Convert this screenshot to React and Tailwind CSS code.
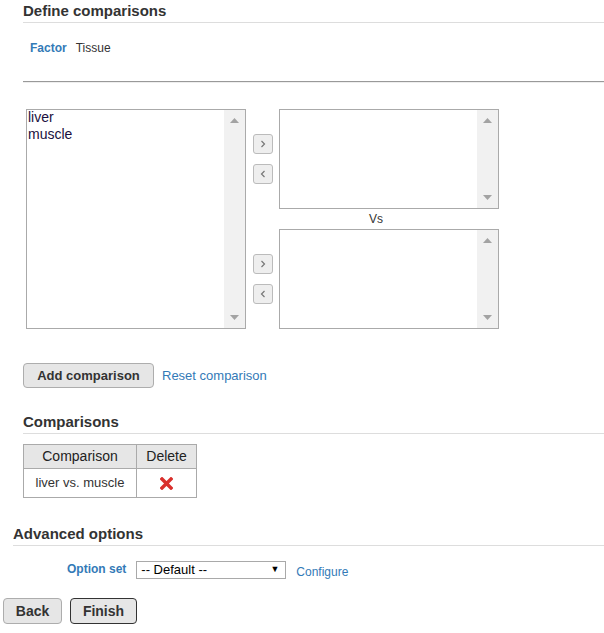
import React from "react";

function ScrollList({ items = [], className = "" }) {
    return (
        <div className={`flex border border-[#aaa] bg-white ${className}`}>
            <div className="flex-1 pl-[1px] -mt-[1px] text-[14px] leading-[17px] text-[#1a1040]">
                {items.map((it) => (
                    <div key={it}>{it}</div>
                ))}
            </div>
            {/* fake scrollbar */}
            <div className="w-[21px] bg-[#f1f1f1] flex flex-col justify-between items-center py-[8px]">
                <svg width="9" height="5" viewBox="0 0 9 5">
                    <polygon points="0,5 9,5 4.5,0" fill="#a3a3a3" />
                </svg>
                <svg width="9" height="5" viewBox="0 0 9 5">
                    <polygon points="0,0 9,0 4.5,5" fill="#a3a3a3" />
                </svg>
            </div>
        </div>
    );
}

function ArrowBtn({ dir }) {
    return (
        <button className="w-[20px] h-[20px] rounded-[3px] border border-[#bbb] bg-[#eee] flex items-center justify-center">
            <svg width="6" height="8" viewBox="0 0 6 8">
                {dir === "right" ? (
                    <polyline points="1.5,1 4.5,4 1.5,7" fill="none" stroke="#777" strokeWidth="1.2" />
                ) : (
                    <polyline points="4.5,1 1.5,4 4.5,7" fill="none" stroke="#777" strokeWidth="1.2" />
                )}
            </svg>
        </button>
    );
}

function Heading({ children, className = "" }) {
    return (
        <h3 className={`text-[15px] font-bold leading-[20px] pt-[1px] pb-[1px] text-[#333] border-b border-[#ddd] ${className}`}>
            {children}
        </h3>
    );
}

export default function App() {
    return (
        <div className="w-[604px] h-[633px] bg-white text-[#333] overflow-hidden" style={{ fontFamily: '"Liberation Sans", Arial, sans-serif' }}>
            {/* Define comparisons */}
            <div className="pl-[23px]">
                <Heading>Define comparisons</Heading>

                <div className="mt-[17px] pl-[7px] leading-[16px] text-[12px] flex gap-[9px]">
                    <span className="font-bold text-[#337ab7]">Factor</span>
                    <span>Tissue</span>
                </div>

                <div className="mt-[25px] border-t border-[#999] border-b border-b-[#eee] h-[2px]" />

                {/* list boxes */}
                <div className="mt-[26px] ml-[3px] flex">
                    <ScrollList items={["liver", "muscle"]} className="w-[220px] h-[220px]" />

                    <div className="ml-[7px] flex flex-col w-[246px]">
                        <div className="flex h-[100px]">
                            <div className="flex flex-col gap-[10px] pt-[25px]">
                                <ArrowBtn dir="right" />
                                <ArrowBtn dir="left" />
                            </div>
                            <ScrollList className="ml-[6px] w-[220px] h-[100px]" />
                        </div>
                        <div className="h-[20px] text-center text-[12px] leading-[20px]">Vs</div>
                        <div className="flex h-[100px]">
                            <div className="flex flex-col gap-[10px] pt-[25px]">
                                <ArrowBtn dir="right" />
                                <ArrowBtn dir="left" />
                            </div>
                            <ScrollList className="ml-[6px] w-[220px] h-[100px]" />
                        </div>
                    </div>
                </div>

                {/* buttons */}
                <div className="mt-[34px] flex items-center gap-[8px]">
                    <button className="h-[25px] w-[131px] rounded-[4px] border border-[#adadad] bg-[#e6e6e6] text-[13px] font-bold text-[#333]">
                        Add comparison
                    </button>
                    <span className="text-[13px] text-[#337ab7]">Reset comparison</span>
                </div>

                {/* Comparisons */}
                <Heading className="mt-[23px]">Comparisons</Heading>

                <table className="mt-[10px] border-collapse text-[13px]">
                    <thead>
                        <tr className="bg-[#e6e6e6] h-[24px]">
                            <th className="w-[113px] border border-[#aaa] font-normal text-[14px] text-[#222]">Comparison</th>
                            <th className="w-[60px] border border-[#aaa] font-normal text-[14px] text-[#222]">Delete</th>
                        </tr>
                    </thead>
                    <tbody>
                        <tr className="h-[29px]">
                            <td className="border border-[#aaa] text-center">liver vs. muscle</td>
                            <td className="border border-[#aaa] text-center">
                                <span className="inline-block align-middle">
                                    <svg width="13" height="13" viewBox="0 0 13 13">
                                        <path d="M2 2 L11 11 M11 2 L2 11" stroke="#d9302c" strokeWidth="3.4" strokeLinecap="square" />
                                    </svg>
                                </span>
                            </td>
                        </tr>
                    </tbody>
                </table>
            </div>

            {/* Advanced options */}
            <div className="pl-[13px] mt-[25px]">
                <Heading>Advanced options</Heading>
                <div className="mt-[15px] pl-[54px] flex items-start">
                    <span className="text-[12px] font-bold text-[#337ab7] leading-[14px] mt-[1px]">Option set</span>
                    <div className="ml-[10px] w-[150px] h-[18px] border border-[#a9a9a9] bg-white flex items-center justify-between pl-[4px] pr-[6px] text-[13px] text-black">
                        <span>-- Default --</span>
                        <span className="text-[9px]">▼</span>
                    </div>
                    <span className="ml-[10px] mt-[4px] text-[12px] leading-[14px] text-[#337ab7]">Configure</span>
                </div>
            </div>

            <div className="mt-[19px] pl-[3px] flex gap-[8px]">
                <button className="h-[26px] w-[59px] rounded-[4px] border border-[#adadad] bg-[#e6e6e6] text-[14px] font-bold text-[#333]">
                    Back
                </button>
                <button className="h-[26px] w-[67px] rounded-[4px] border border-[#333] bg-[#e6e6e6] text-[14px] font-bold text-[#333]">
                    Finish
                </button>
            </div>
        </div>
    );
}
